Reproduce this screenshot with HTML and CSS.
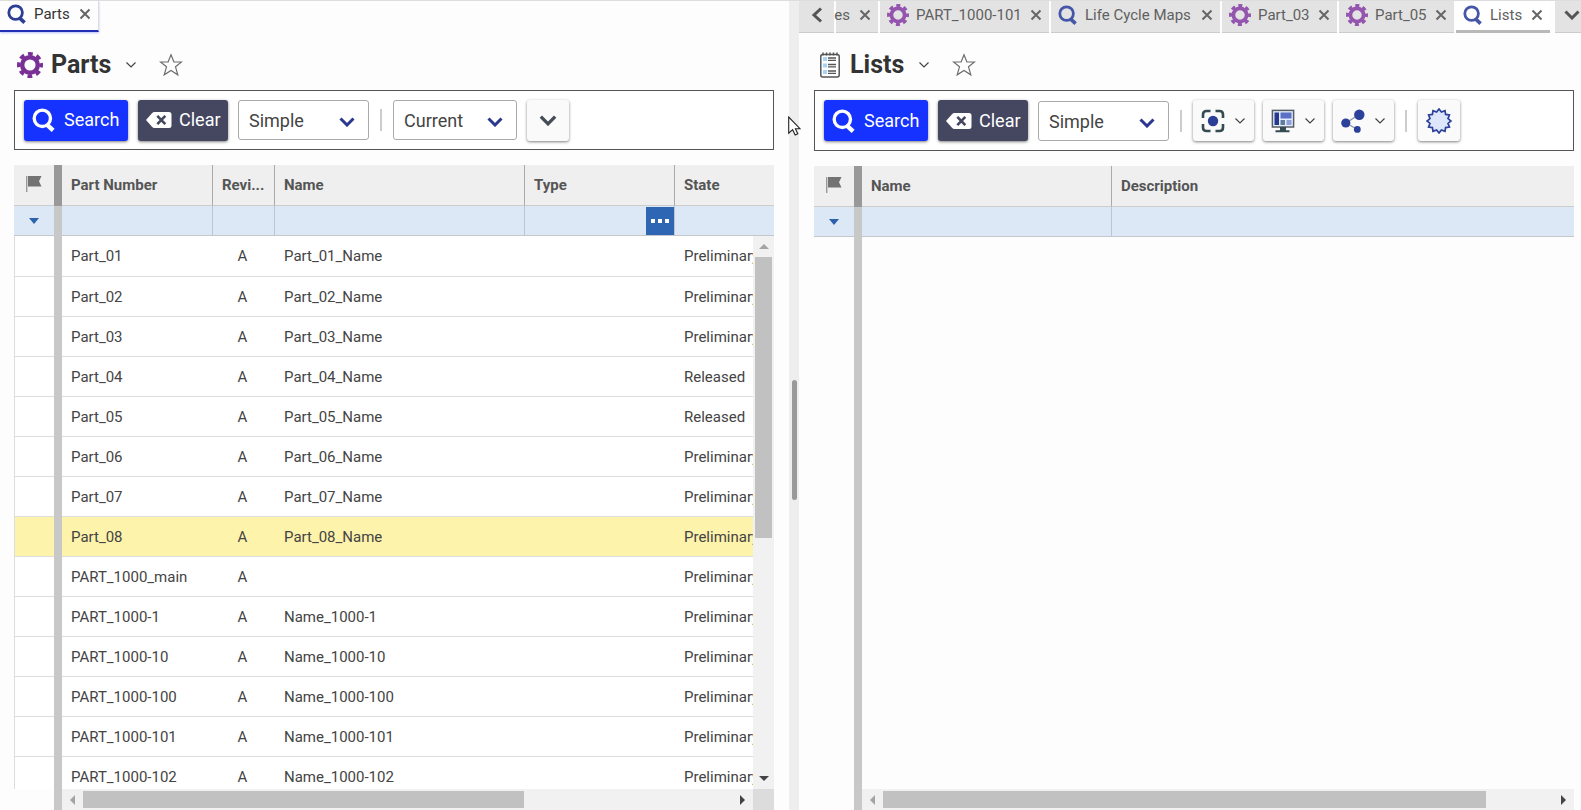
FILE: index.html
```html
<!DOCTYPE html>
<html lang="en">
<head>
<meta charset="utf-8">
<title>Parts</title>
<link rel="stylesheet" href="styles.css">
</head>
<body>
<svg class="sprite" aria-hidden="true">
  <symbol id="search" viewBox="0 0 20 20"><circle cx="8.6" cy="8.6" r="6.8" fill="none" stroke="currentColor" stroke-width="2.8"/><path d="M12.2 13.6 17.6 18.6" stroke="currentColor" stroke-width="3.6"/></symbol>
  <symbol id="gear" viewBox="0 0 26 26"><circle cx="13" cy="13" r="7.8" fill="none" stroke="currentColor" stroke-width="4.4"/><circle cx="13" cy="13" r="11.2" fill="none" stroke="currentColor" stroke-width="3.6" stroke-dasharray="4.8 4" stroke-dashoffset="2.4"/></symbol>
  <symbol id="close" viewBox="0 0 12 12"><path d="M1.5 1.5 10.5 10.5M10.5 1.5 1.5 10.5" stroke="currentColor" stroke-width="2"/></symbol>
  <symbol id="thin" viewBox="0 0 12 8"><path d="M1.5 1.5 6 6 10.5 1.5" fill="none" stroke="currentColor" stroke-width="1.2"/></symbol>
  <symbol id="chev" viewBox="0 0 16 10"><path d="M1.5 1.5 8 8 14.5 1.5" fill="none" stroke="currentColor" stroke-width="3"/></symbol>
  <symbol id="star" viewBox="0 0 24 24"><path d="M12 1.8 14.9 9h7.6l-6 4.8 2.3 8L12 17.4l-6.8 4.4 2.3-8-6-4.8h7.6z" fill="none" stroke="#6c6c6c" stroke-width="1.2"/></symbol>
  <symbol id="clear" viewBox="0 0 26 16"><path d="M0 8 6 1.2Q7 0 8.6 0H23q2.5 0 2.5 2.5v11Q25.500 16 23 16H8.600Q7 16 6 14.800z" fill="#fff"/><path d="M11.300 3.800l8 8.400M19.300 3.800l-8 8.400" stroke="#44475f" stroke-width="2.600"/></symbol>
  <symbol id="flag" viewBox="0 0 16 16"><path d="M.7 0V16" stroke="#999" stroke-width="1.400"/><path d="M2 0H15.500L13 5.200 15.500 10.500H2z" fill="#737373"/></symbol>
</svg>
<main class="app">
  <section class="pane">
    <nav class="tabs">
      <div class="tab tab-main"><svg class="i20 navy"><use href="#search"/></svg><span>Parts</span><button class="x" aria-label="Close Parts"><svg><use href="#close"/></svg></button></div>
    </nav>
    <header class="title">
      <svg class="gear purple"><use href="#gear"/></svg><h1>Parts</h1>
      <button class="plain" aria-label="Parts menu"><svg class="thin"><use href="#thin"/></svg></button>
      <button class="plain" aria-label="Favorite"><svg class="star"><use href="#star"/></svg></button>
    </header>
    <div class="toolbar">
      <button class="btn blue"><svg class="i24"><use href="#search"/></svg>Search</button>
      <button class="btn slate"><svg class="clr"><use href="#clear"/></svg>Clear</button>
      <label class="sel"><select aria-label="Search mode"><option>Simple</option></select><svg><use href="#chev"/></svg></label>
      <span class="sep"></span>
      <label class="sel narrow"><select aria-label="Revision"><option>Current</option></select><svg><use href="#chev"/></svg></label>
      <button class="btn light square" aria-label="More"><svg class="more"><use href="#chev"/></svg></button>
    </div>
    <div class="grid">
      <div class="view">
        <table>
          <colgroup><col class="c-flag"><col class="c-bar"><col class="c-num"><col class="c-rev"><col class="c-name"><col class="c-type"><col></colgroup>
          <thead>
            <tr class="head"><th aria-label="Flag"><svg class="flag"><use href="#flag"/></svg></th><th class="bar"></th><th>Part Number</th><th>Revi...</th><th>Name</th><th>Type</th><th>State</th></tr>
            <tr class="filter"><td><button class="plain tri" aria-label="Filter operators"></button></td><td class="bar"></td><td><input aria-label="Filter part number"></td><td><input aria-label="Filter revision"></td><td><input aria-label="Filter name"></td><td><div class="pick"><input aria-label="Filter type"><button aria-label="Choose type"><i></i><i></i><i></i></button></div></td><td><input aria-label="Filter state"></td></tr>
          </thead>
          <tbody>
            <tr><td></td><td class="bar"></td><td>Part_01</td><td>A</td><td>Part_01_Name</td><td></td><td>Preliminary</td></tr>
            <tr><td></td><td class="bar"></td><td>Part_02</td><td>A</td><td>Part_02_Name</td><td></td><td>Preliminary</td></tr>
            <tr><td></td><td class="bar"></td><td>Part_03</td><td>A</td><td>Part_03_Name</td><td></td><td>Preliminary</td></tr>
            <tr><td></td><td class="bar"></td><td>Part_04</td><td>A</td><td>Part_04_Name</td><td></td><td>Released</td></tr>
            <tr><td></td><td class="bar"></td><td>Part_05</td><td>A</td><td>Part_05_Name</td><td></td><td>Released</td></tr>
            <tr><td></td><td class="bar"></td><td>Part_06</td><td>A</td><td>Part_06_Name</td><td></td><td>Preliminary</td></tr>
            <tr><td></td><td class="bar"></td><td>Part_07</td><td>A</td><td>Part_07_Name</td><td></td><td>Preliminary</td></tr>
            <tr class="picked"><td></td><td class="bar"></td><td>Part_08</td><td>A</td><td>Part_08_Name</td><td></td><td>Preliminary</td></tr>
            <tr><td></td><td class="bar"></td><td>PART_1000_main</td><td>A</td><td></td><td></td><td>Preliminary</td></tr>
            <tr><td></td><td class="bar"></td><td>PART_1000-1</td><td>A</td><td>Name_1000-1</td><td></td><td>Preliminary</td></tr>
            <tr><td></td><td class="bar"></td><td>PART_1000-10</td><td>A</td><td>Name_1000-10</td><td></td><td>Preliminary</td></tr>
            <tr><td></td><td class="bar"></td><td>PART_1000-100</td><td>A</td><td>Name_1000-100</td><td></td><td>Preliminary</td></tr>
            <tr><td></td><td class="bar"></td><td>PART_1000-101</td><td>A</td><td>Name_1000-101</td><td></td><td>Preliminary</td></tr>
            <tr><td></td><td class="bar"></td><td>PART_1000-102</td><td>A</td><td>Name_1000-102</td><td></td><td>Preliminary</td></tr>
          </tbody>
        </table>
        <div class="vscroll"><button class="arrow up" aria-label="Scroll up"></button><div class="track"><div class="thumb"></div></div><button class="arrow down" aria-label="Scroll down"></button></div>
      </div>
      <div class="foot"><span class="foot-flag"></span><span class="foot-bar"></span><div class="hscroll"><button class="arrow left" aria-label="Scroll left"></button><div class="track"><div class="thumb"></div></div><button class="arrow right" aria-label="Scroll right"></button></div><span class="corner"></span></div>
    </div>
  </section>

  <div class="splitter"><span class="grip"></span>
    <svg class="cursor" viewBox="0 0 13 20"><path d="M.7 1V17.200L4.600 13.700 7.200 19 9.800 17.800 7.400 12.700H12z" fill="#fff" stroke="#222" stroke-width="1.100"/></svg>
  </div>

  <section class="pane second">
    <nav class="tabs many">
      <button class="tab step" aria-label="Previous tabs"><svg viewBox="0 0 12 16"><path d="M10 1.500 3 8l7 6.500" fill="none" stroke="#555" stroke-width="3"/></svg></button>
      <div class="tab cut"><span>es</span><button class="x" aria-label="Close tab"><svg><use href="#close"/></svg></button></div>
      <div class="tab wide"><svg class="i22 violet"><use href="#gear"/></svg><span>PART_1000-101</span><button class="x" aria-label="Close PART_1000-101"><svg><use href="#close"/></svg></button></div>
      <div class="tab wide"><svg class="i20 indigo"><use href="#search"/></svg><span>Life Cycle Maps</span><button class="x" aria-label="Close Life Cycle Maps"><svg><use href="#close"/></svg></button></div>
      <div class="tab mid"><svg class="i22 violet"><use href="#gear"/></svg><span>Part_03</span><button class="x" aria-label="Close Part_03"><svg><use href="#close"/></svg></button></div>
      <div class="tab mid"><svg class="i22 violet"><use href="#gear"/></svg><span>Part_05</span><button class="x" aria-label="Close Part_05"><svg><use href="#close"/></svg></button></div>
      <div class="tab current"><svg class="i20 indigo"><use href="#search"/></svg><span>Lists</span><button class="x" aria-label="Close Lists"><svg><use href="#close"/></svg></button></div>
      <button class="tab last" aria-label="All tabs"><svg><use href="#chev"/></svg></button>
    </nav>
    <header class="title">
      <svg class="pad" viewBox="0 0 22 26"><rect x="1.800" y="2.500" width="18.400" height="22.500" rx="2" fill="#fff" stroke="#555" stroke-width="1.500"/><path d="M4 .5v3M7.500 .5v3M11 .5v3M14.500 .5v3M18 .5v3" stroke="#555" stroke-width="1.500"/><path d="M4 5h4v4H4zM4 11.500h4v4H4zM4 18h4v4H4z" fill="#a9d4f5"/><path d="M9 6h8M9 8.300h8M9 12.500h8M9 14.800h8M9 19h8M9 21.300h8" stroke="#555" stroke-width="1.300"/></svg><h1>Lists</h1>
      <button class="plain" aria-label="Lists menu"><svg class="thin"><use href="#thin"/></svg></button>
      <button class="plain" aria-label="Favorite"><svg class="star"><use href="#star"/></svg></button>
    </header>
    <div class="toolbar tall">
      <button class="btn blue"><svg class="i24"><use href="#search"/></svg>Search</button>
      <button class="btn slate"><svg class="clr"><use href="#clear"/></svg>Clear</button>
      <label class="sel"><select aria-label="Search mode"><option>Simple</option></select><svg><use href="#chev"/></svg></label>
      <span class="sep"></span>
      <div class="group">
        <button class="btn light" aria-label="Focus"><svg class="i24" viewBox="0 0 24 24"><path d="M2 9V5.500Q2 2 5.500 2H9.500M14.500 2h4Q22 2 22 5.500V9M22 15v3.500Q22 22 18.500 22h-4M9.500 22h-4Q2 22 2 18.500V15" fill="none" stroke="#354b52" stroke-width="2.600"/><circle cx="12" cy="12" r="5.200" fill="#2b3f96"/></svg><svg class="thin"><use href="#thin"/></svg></button>
        <button class="btn light" aria-label="Layout"><svg class="i24" viewBox="0 0 24 24"><rect x="1.400" y="1.400" width="21.200" height="16.600" fill="#e4ebfb" stroke="#555e66" stroke-width="1.500"/><path d="M3.500 3.500H8V16H3.500z" fill="#27398f"/><path d="M9.500 3.500H20.500V9.500H9.500z" fill="#5b70c4"/><path d="M9.500 11H14v5H9.500z" fill="#5f7d9c"/><path d="M15.500 11h5v5h-5z" fill="#8fa0d8"/><path d="M9 18h6v3.200h3.500v2H4.500v-2H9z" fill="#354b52"/></svg><svg class="thin"><use href="#thin"/></svg></button>
        <button class="btn light" aria-label="Share"><svg class="i24" viewBox="0 0 24 24"><path d="M5 14 18 5.500M5 14l11.500 6.500" stroke="#8a95a8" stroke-width="1.400"/><circle cx="4.800" cy="14" r="4.600" fill="#2c4199"/><circle cx="18.300" cy="5.800" r="5.200" fill="#2c4199"/><circle cx="16.300" cy="20.400" r="3.400" fill="#2c4199"/></svg><svg class="thin"><use href="#thin"/></svg></button>
      </div>
      <span class="sep"></span>
      <button class="btn light square" aria-label="New item"><svg class="i26" viewBox="0 0 26 26"><path d="M13 1 15.400 4 19 2.600 19.600 6.400 23.400 7 22 10.600 25 13 22 15.400 23.400 19 19.600 19.600 19 23.400 15.400 22 13 25 10.600 22 7 23.400 6.400 19.600 2.600 19 4 15.400 1 13 4 10.600 2.600 7 6.400 6.400 7 2.600 10.600 4z" fill="#dde6fb" stroke="#2c4199" stroke-width="1.700"/></svg></button>
    </div>
    <div class="grid">
      <div class="view empty">
        <table>
          <colgroup><col class="c-flag"><col class="c-bar"><col class="c-name"><col></colgroup>
          <thead>
            <tr class="head"><th aria-label="Flag"><svg class="flag"><use href="#flag"/></svg></th><th class="bar"></th><th>Name</th><th>Description</th></tr>
            <tr class="filter"><td><button class="plain tri" aria-label="Filter operators"></button></td><td class="bar"></td><td><input aria-label="Filter name"></td><td><input aria-label="Filter description"></td></tr>
          </thead>
        </table>
      </div>
      <div class="foot"><span class="foot-flag"></span><span class="foot-bar"></span><div class="hscroll"><button class="arrow left" aria-label="Scroll left"></button><div class="track"><div class="thumb long"></div></div><button class="arrow right" aria-label="Scroll right"></button></div></div>
    </div>
  </section>
</main>
</body>
</html>
```

FILE: styles.css
```css
* { box-sizing: border-box; }
body { margin: 0; background: #fdfdfd; color: #444; font: 15px/20px Roboto, "Liberation Sans", sans-serif; }
button, input, select { font: inherit; color: inherit; }
button { border: 0; padding: 0; background: none; }
svg { display: block; flex: none; }
.sprite { position: absolute; width: 0; height: 0; }

.app { display: grid; grid-template-columns: minmax(0, 789fr) 10px minmax(0, 782fr); height: 100vh; overflow: hidden; border-top: 1px solid #ddd; }
.pane { display: flex; flex-direction: column; min-width: 0; min-height: 0; padding: 0 15px 0 14px; }
.second { padding: 0 7px 0 15px; }

/* Tabs */
.tabs { display: flex; flex: none; height: 32px; margin: 0 -15px 0 -14px; font-size: 15px; color: #333; }
.many { margin: 0 -7px 0 -15px; gap: 2px; color: #606060; }
.tab { display: flex; flex: none; align-items: center; gap: 7px; padding: 0 7px 4px; white-space: nowrap; }
.tab-main { height: 31px; border-bottom: 2px solid #1f2fb4; border-right: 1px solid #ddd; box-shadow: 0 1px 2px #b9c0ff; }
.tab-main .x { margin-left: 2px; }
.x { color: #666; }
.x svg { width: 12px; height: 12px; }
.many .tab { background: #e3e3e3; border-bottom: 1px solid #ccc; }
.many .step { width: 35px; justify-content: center; }
.step svg { width: 12px; height: 16px; }
.many .cut { width: 42px; padding-left: 0; justify-content: flex-end; }
.many .cut, .many .x { gap: 9px; }
.wide { width: 169px; }
.mid { width: 115px; }
.wide span, .mid span, .current span { flex: 1; }
.many .current { width: 94px; background: #fff; border-bottom: 3px solid #b9b9b9; padding-bottom: 2px; }
.many .last { flex: 1; margin-left: 3px; padding: 0 0 4px 9px; overflow: hidden; color: #555; }
.last svg { width: 16px; height: 10px; }
.i20 { width: 20px; height: 20px; }
.i22 { width: 22px; height: 22px; }
.i24 { width: 24px; height: 24px; }
.i26 { width: 26px; height: 26px; }
.navy { color: #2c3f94; }
.indigo { color: #4656a8; }
.purple { color: #7a2f96; }
.violet { color: #9455ae; }

/* Title */
.title { display: flex; flex: none; align-items: center; height: 57px; padding: 8px 0 1px 3px; }
.title h1 { margin: 0 14px 0 8px; font-size: 25px; line-height: 32px; font-weight: 700; color: #333; }
.second .title { padding-left: 5px; }
.second .title h1 { margin-left: 9px; }
.gear { width: 26px; height: 26px; }
.pad { width: 22px; height: 26px; }
.thin { width: 12px; height: 8px; color: #444; }
.star { width: 24px; height: 24px; margin-left: 22px; }

/* Toolbar */
.toolbar { display: flex; flex: none; align-items: center; gap: 10px; height: 60px; padding: 0 9px; border: 1px solid #555; background: #fff; }
.tall { height: 61px; }
.btn { display: flex; flex: none; align-items: center; height: 41px; border-radius: 3px; font-size: 18px; color: #fff; box-shadow: 0 1px 3px rgba(0, 0, 0, .5); }
.blue { width: 104px; padding-left: 8px; gap: 8px; background: #1532ff; }
.slate { width: 90px; padding-left: 8px; gap: 7px; background: #44475f; }
.clr { width: 26px; height: 16px; }
.light { width: 61px; padding-left: 8px; gap: 9px; background: #fafafa; }
.square { width: 42px; padding: 0; justify-content: center; }
.more { width: 18px; height: 11px; color: #444c55; }
.group { display: flex; gap: 9px; }
.sel { position: relative; flex: none; width: 131px; height: 40px; }
.narrow { width: 124px; }
.sel select { width: 100%; height: 40px; padding: 2px 10px 0; appearance: none; border: 1px solid #aaa; border-radius: 3px; background: #fff; font-size: 18px; color: #444; }
.sel svg { position: absolute; right: 14px; top: 17px; width: 16px; height: 10px; color: #2b3890; pointer-events: none; }
.sep { flex: none; width: 2px; height: 22px; margin: 0 1px; background: #ccc; }

/* Data grids */
.grid { display: flex; flex: 1; flex-direction: column; min-height: 0; margin-top: 15px; }
.view { position: relative; flex: 1; min-height: 0; overflow: hidden; }
.empty { background: linear-gradient(#c8c8c8, #c8c8c8) 40px 0 / 8px 100% no-repeat; }
table { width: 100%; table-layout: fixed; border-collapse: separate; border-spacing: 0; }
.c-flag { width: 40px; }
.c-bar { width: 8px; }
.c-num { width: 151px; }
.c-rev { width: 62px; }
.c-name { width: 250px; }
.c-type { width: 150px; }
th, td { padding: 0; text-align: left; white-space: nowrap; overflow: hidden; }
.head th { height: 41px; padding: 0 4px 0 9px; border-right: 1px solid #aaa; border-bottom: 1px solid #ccc; background: #efefef; color: #555; font-weight: 700; }
.head th:first-child, .head th:last-child { border-right: 0; }
.head th:first-child { padding: 0 12px 2px; }
.head .bar { padding: 0; border: 0; background: #999; }
.flag { width: 16px; height: 16px; }
.filter td { height: 30px; border-right: 1px solid #b9c6d4; border-bottom: 1px solid #c4c8cc; background: #dce8f6; }
.filter td:first-child, .filter td:last-child { border-right: 0; }
.filter input { display: block; width: 100%; height: 28px; padding: 0 9px; border: 0; background: none; outline: 0; }
.filter .bar, tbody .bar { border: 0; background: #c8c8c8; }
.tri { display: block; width: 0; height: 0; margin: 0 auto; border: 5px solid transparent; border-top: 6px solid #2c61ac; border-bottom: 0; }
.pick { display: flex; height: 28px; }
.pick button { display: flex; flex: none; align-items: center; justify-content: center; gap: 3px; width: 28px; background: #2f66b3; }
.pick i { width: 4px; height: 4px; background: #fff; }
tbody td { height: 40px; padding: 0 9px; border-bottom: 1px solid #ddd; background: #fff; }
tbody tr:first-child td { height: 41px; }
tbody td:first-child { border-left: 1px solid #ddd; }
tbody td:nth-child(4) { padding-right: 12px; text-align: center; }
tbody .bar { padding: 0; }
.picked td:not(.bar) { background: #fef3ab; }

/* Scrollbars */
.vscroll { position: absolute; right: 0; top: 71px; bottom: 0; display: flex; flex-direction: column; width: 21px; background: #f1f1f1; }
.track { flex: 1; }
.vscroll .thumb { width: 17px; height: 55%; margin: 0 auto; background: #c1c1c1; }
.arrow { display: flex; flex: none; align-items: center; justify-content: center; width: 21px; height: 21px; }
.arrow::before { content: ""; border: 5px solid transparent; }
.up::before { border-top: 0; border-bottom-color: #a3a3a3; }
.down::before { border-bottom: 0; border-top-color: #444; }
.left::before { border-left: 0; border-right-color: #a3a3a3; }
.right::before { border-right: 0; border-left-color: #444; }
.foot { display: flex; flex: none; height: 21px; }
.foot-flag { width: 40px; }
.foot-bar { width: 8px; background: #c8c8c8; }
.hscroll { display: flex; flex: 1; align-items: center; background: #f1f1f1; }
.hscroll .thumb { width: 68%; height: 17px; background: #c1c1c1; }
.hscroll .long { width: 90%; }
.corner { width: 21px; background: #dcdcdc; }

/* Splitter */
.splitter { position: relative; display: flex; align-items: center; justify-content: center; background: #eee; }
.grip { width: 5px; height: 120px; margin-top: 68px; border-radius: 3px; background: #999; }
.cursor { position: absolute; left: -1px; top: 115px; width: 13px; height: 20px; }
```
